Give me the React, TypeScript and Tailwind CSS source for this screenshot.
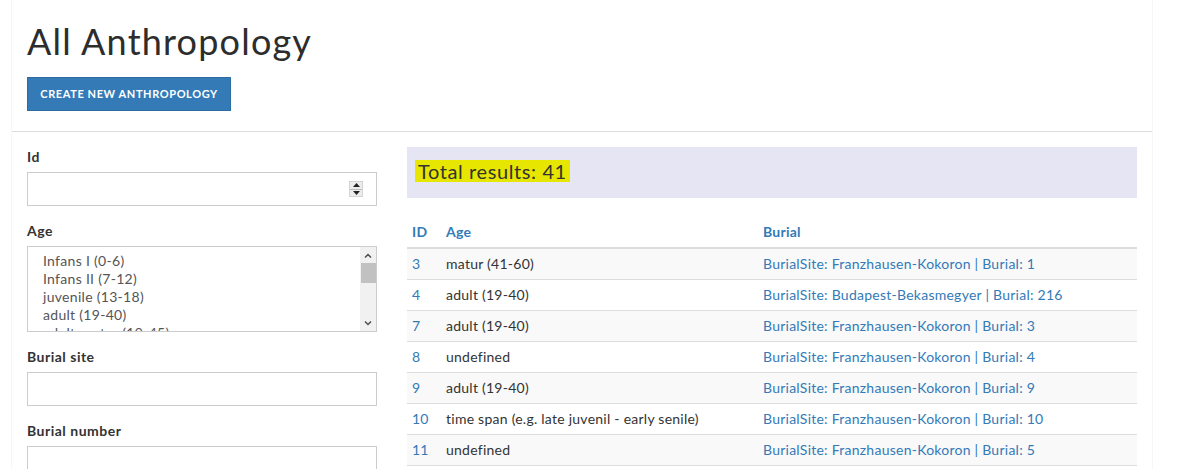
import React from "react";

const font = { fontFamily: "Lato, 'Open Sans', sans-serif" };

const ages = [
  "Infans I (0-6)",
  "Infans II (7-12)",
  "juvenile (13-18)",
  "adult (19-40)",
  "adult-matur (19-45)",
];

const rows = [
  { id: 3, age: "matur (41-60)", burial: "BurialSite: Franzhausen-Kokoron | Burial: 1" },
  { id: 4, age: "adult (19-40)", burial: "BurialSite: Budapest-Bekasmegyer | Burial: 216" },
  { id: 7, age: "adult (19-40)", burial: "BurialSite: Franzhausen-Kokoron | Burial: 3" },
  { id: 8, age: "undefined", burial: "BurialSite: Franzhausen-Kokoron | Burial: 4" },
  { id: 9, age: "adult (19-40)", burial: "BurialSite: Franzhausen-Kokoron | Burial: 9" },
  { id: 10, age: "time span (e.g. late juvenil - early senile)", burial: "BurialSite: Franzhausen-Kokoron | Burial: 10" },
  { id: 11, age: "undefined", burial: "BurialSite: Franzhausen-Kokoron | Burial: 5" },
];

function Label({ children }: { children: React.ReactNode }) {
  return (
    <label className="block text-[14px] leading-[20px] font-bold text-[#333] tracking-[0.5px] mb-[5px]">
      {children}
    </label>
  );
}

function TextInput() {
  return <div className="h-[34px] border border-[#ccc] bg-white" />;
}

function Spinner() {
  return (
    <div className="w-[14px] h-[16px] border border-[#d4d4d4] bg-[#ececec] flex flex-col">
      <div className="flex-1 flex items-center justify-center border-b border-[#bbb]">
        <svg width="7" height="4" viewBox="0 0 7 4"><path d="M0 4 L3.5 0 L7 4 Z" fill="#222" /></svg>
      </div>
      <div className="flex-1 flex items-center justify-center">
        <svg width="7" height="4" viewBox="0 0 7 4"><path d="M0 0 L3.5 4 L7 0 Z" fill="#222" /></svg>
      </div>
    </div>
  );
}

function AgeSelect() {
  return (
    <div className="h-[86px] border border-[#ccc] bg-white flex overflow-hidden">
      <div className="flex-1 pl-[15px] pt-[5px] text-[14px] leading-[18px] text-[#555] tracking-[0.3px] overflow-hidden">
        {ages.map((a) => (
          <div key={a}>{a}</div>
        ))}
      </div>
      <div className="w-[16px] bg-[#f1f1f1] flex flex-col items-center">
        <svg className="mt-[6px]" width="8" height="5" viewBox="0 0 8 5">
          <path d="M1 4.5 L4 1.5 L7 4.5" stroke="#505050" strokeWidth="1.5" fill="none" />
        </svg>
        <div className="mt-[5px] w-[15px] h-[20px] bg-[#c1c1c1]" />
        <div className="flex-1" />
        <svg className="mb-[5px]" width="8" height="5" viewBox="0 0 8 5">
          <path d="M1 0.5 L4 3.5 L7 0.5" stroke="#505050" strokeWidth="1.5" fill="none" />
        </svg>
      </div>
    </div>
  );
}

export default function App() {
  return (
    <div className="bg-white min-h-[469px] overflow-hidden h-[469px]" style={font}>
      <div className="ml-[11px] w-[1142px] min-h-[469px] border-x border-[#f6f6f6]">
        <div className="px-[15px] pt-[21px]">
          <h1 className="text-[36px] leading-[40px] text-[#2d2d2d] font-normal tracking-[1.2px]">All Anthropology</h1>
          <button className="mt-[16px] h-[34px] w-[204px] bg-[#337ab7] border border-[#2e6da4] text-white text-[11px] font-bold uppercase tracking-[0.6px]">
            Create new anthropology
          </button>
        </div>
        <div className="mt-[20px] border-t border-[#ddd]" />
        <div className="px-[15px] pt-[15px] flex gap-[30px]">
          <div className="w-[350px] shrink-0">
            <div className="mb-[15px]">
              <Label>Id</Label>
              <div className="h-[34px] border border-[#ccc] bg-white flex items-center justify-end pr-[13px]">
                <Spinner />
              </div>
            </div>
            <div className="mb-[15px]">
              <Label>Age</Label>
              <AgeSelect />
            </div>
            <div className="mb-[15px]">
              <Label>Burial site</Label>
              <TextInput />
            </div>
            <div className="mb-[15px]">
              <Label>Burial number</Label>
              <TextInput />
            </div>
          </div>
          <div className="w-[730px] shrink-0">
            <div className="h-[51px] bg-[#e5e5f4] flex items-center pl-[8px] pb-[3px]">
              <span className="bg-[#e6e600] text-[20px] leading-[22px] text-[#333] px-[3px] tracking-[0.6px]">
                Total results: 41
              </span>
            </div>
            <table className="mt-[19px] w-full text-[14px] leading-[20px] tracking-[0.25px] border-collapse table-fixed">
              <colgroup>
                <col className="w-[34px]" />
                <col className="w-[317px]" />
                <col />
              </colgroup>
              <thead>
                <tr className="border-b-2 border-[#ddd]">
                  <th className="p-[5px] text-left font-bold text-[#337ab7]">ID</th>
                  <th className="p-[5px] text-left font-bold text-[#337ab7]">Age</th>
                  <th className="p-[5px] text-left font-bold text-[#337ab7]">Burial</th>
                </tr>
              </thead>
              <tbody>
                {rows.map((r, i) => (
                  <tr key={r.id} className={i % 2 === 0 ? "bg-[#f9f9f9]" : "bg-white"}>
                    <td className={`p-[5px] text-[#337ab7] ${i > 0 ? "border-t border-[#ddd]" : ""}`}>{r.id}</td>
                    <td className={`p-[5px] text-[#333] ${i > 0 ? "border-t border-[#ddd]" : ""}`}>{r.age}</td>
                    <td className={`p-[5px] text-[#337ab7] ${i > 0 ? "border-t border-[#ddd]" : ""}`}>{r.burial}</td>
                  </tr>
                ))}
                <tr className="border-t border-[#ddd]">
                  <td colSpan={3} className="h-[4px] p-0" />
                </tr>
              </tbody>
            </table>
          </div>
        </div>
      </div>
    </div>
  );
}
